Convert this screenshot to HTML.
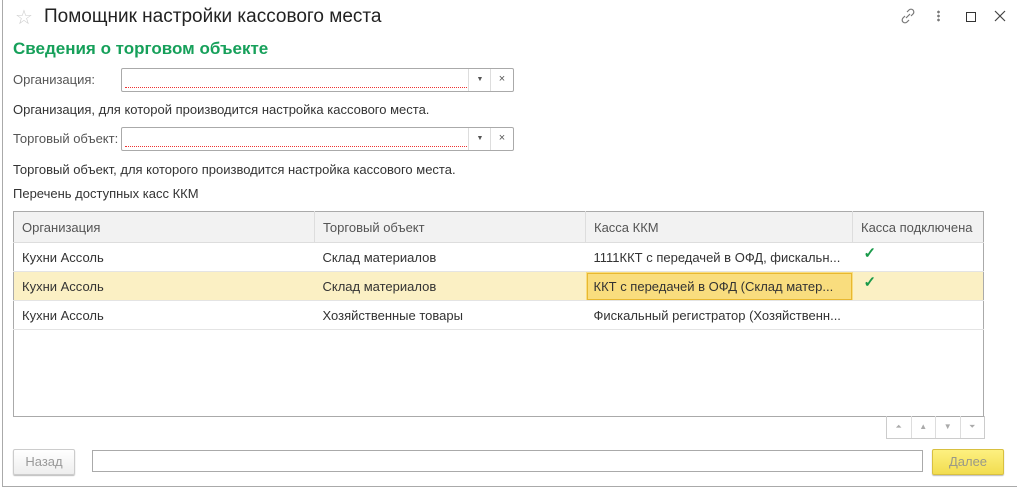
<!DOCTYPE html><html><head><meta charset="utf-8"><style>
body{margin:0;width:1018px;height:489px;background:#fff;font-family:"Liberation Sans",sans-serif;font-size:13px;color:#444;position:relative;overflow:hidden}
.a{position:absolute;white-space:nowrap}
.fr{position:absolute;left:2px;top:-2px;width:1014px;height:488px;border-left:1px solid #aaa;border-bottom:1px solid #aaa;}
.inp{position:absolute;border:1px solid #aaa;border-radius:2px;background:#fff;height:22px}
.inp .u{position:absolute;left:3px;right:46px;bottom:3px;border-bottom:1px dotted #e33}
.inp .dd{position:absolute;right:22px;top:0;width:22px;height:22px;border-left:1px solid #ddd;text-align:center;font-size:7px;line-height:22px;color:#555}
.inp .x{position:absolute;right:0;top:0;width:22px;height:22px;border-left:1px solid #ddd;text-align:center;font-size:11px;line-height:21px;color:#555}
table{position:absolute;left:13px;top:211px;width:971px;border-collapse:collapse;border:1px solid #aaa}
td{height:28px;padding:0 8px;border-bottom:1px solid #e4e4e4;font-size:13px;color:#333;white-space:nowrap}
th{height:30px;padding:0 8px;text-align:left;font-weight:normal;font-size:13px;color:#555;background:#f2f2f2;border-right:1px solid #ddd;border-bottom:1px solid #ddd}
.sel td{background:#fbf0c4}
.ck{color:#1a9a4a;font-size:15px;font-weight:bold;position:relative;top:-4px;left:3px}
</style></head><body>
<div class="fr"></div>
<div class="a" style="left:15px;top:5px;font-size:20px;color:#ccc">☆</div>
<div class="a" style="left:44px;top:6px;font-size:19px;color:#222">Помощник настройки кассового места</div>
<svg class="a" style="left:900px;top:8px" width="16" height="16" viewBox="0 0 16 16" fill="none" stroke="#777" stroke-width="1.2"><path d="M7 4l2-2a2.5 2.5 0 0 1 4 4l-2 2M9 12l-2 2a2.5 2.5 0 0 1-4-4l2-2M6 10l4-4"/></svg>
<div class="a" style="left:937px;top:10px;width:3px;height:12px;background:radial-gradient(circle,#777 1.2px,transparent 1.5px) 0 0/3px 4px"></div>
<div class="a" style="left:966px;top:12px;width:8px;height:8px;border:1.5px solid #333"></div>
<svg class="a" style="left:994px;top:10px" width="12" height="12" viewBox="0 0 12 12" stroke="#444" stroke-width="1.2"><path d="M1 1L11 11M11 1L1 11"/></svg>
<div class="a" style="left:13px;top:39px;font-size:17px;font-weight:bold;color:#16a05a">Сведения о торговом объекте</div>
<div class="a" style="left:13px;top:72px;color:#555">Организация:</div>
<div class="inp" style="left:121px;top:68px;width:391px"><div class="u"></div><div class="dd">▼</div><div class="x">×</div></div>
<div class="a" style="left:13px;top:102px;color:#333">Организация, для которой производится настройка кассового места.</div>
<div class="a" style="left:13px;top:131px;color:#555">Торговый объект:</div>
<div class="inp" style="left:121px;top:127px;width:391px"><div class="u"></div><div class="dd">▼</div><div class="x">×</div></div>
<div class="a" style="left:13px;top:162px;color:#333">Торговый объект, для которого производится настройка кассового места.</div>
<div class="a" style="left:13px;top:186px;color:#333">Перечень доступных касс ККМ</div>
<table>
<tr><th style="width:284px">Организация</th><th style="width:254px">Торговый объект</th><th style="width:250px">Касса ККМ</th><th style="border-right:none">Касса подключена</th></tr>
<tr><td>Кухни Ассоль</td><td>Склад материалов</td><td>1111ККТ с передачей в ОФД, фискальн...</td><td><span class="ck">✓</span></td></tr>
<tr class="sel"><td>Кухни Ассоль</td><td>Склад материалов</td><td style="background:#f9dd7e;outline:1.5px solid #e8b830;outline-offset:-2px">ККТ с передачей в ОФД (Склад матер...</td><td><span class="ck">✓</span></td></tr>
<tr><td>Кухни Ассоль</td><td>Хозяйственные товары</td><td>Фискальный регистратор (Хозяйственн...</td><td></td></tr>
<tr><td colspan="4" style="height:86px;border:none"></td></tr>
</table>
<div class="a" style="left:886px;top:416px;width:97px;height:22px;border:1px solid #ccc;border-top:none;display:flex;font-size:8px;color:#aaa">
<span style="flex:1;text-align:center;line-height:22px;border-right:1px solid #ddd">⏶</span><span style="flex:1;text-align:center;line-height:22px;border-right:1px solid #ddd">▲</span><span style="flex:1;text-align:center;line-height:22px;border-right:1px solid #ddd">▼</span><span style="flex:1;text-align:center;line-height:22px">⏷</span></div>
<div class="a" style="left:13px;top:449px;width:60px;height:24px;border:1px solid #ccc;border-radius:2px;background:linear-gradient(#fff,#eee);box-shadow:0 1px 1px #bbb;text-align:center;line-height:24px;color:#999">Назад</div>
<div class="a" style="left:92px;top:450px;width:829px;height:20px;border:1px solid #aaa"></div>
<div class="a" style="left:932px;top:449px;width:70px;height:24px;border:1px solid #d8c040;border-radius:2px;background:linear-gradient(#fdf080,#f2dd50);box-shadow:0 1px 1px #bbb;text-align:center;line-height:24px;color:#998">Далее</div>
</body></html>
